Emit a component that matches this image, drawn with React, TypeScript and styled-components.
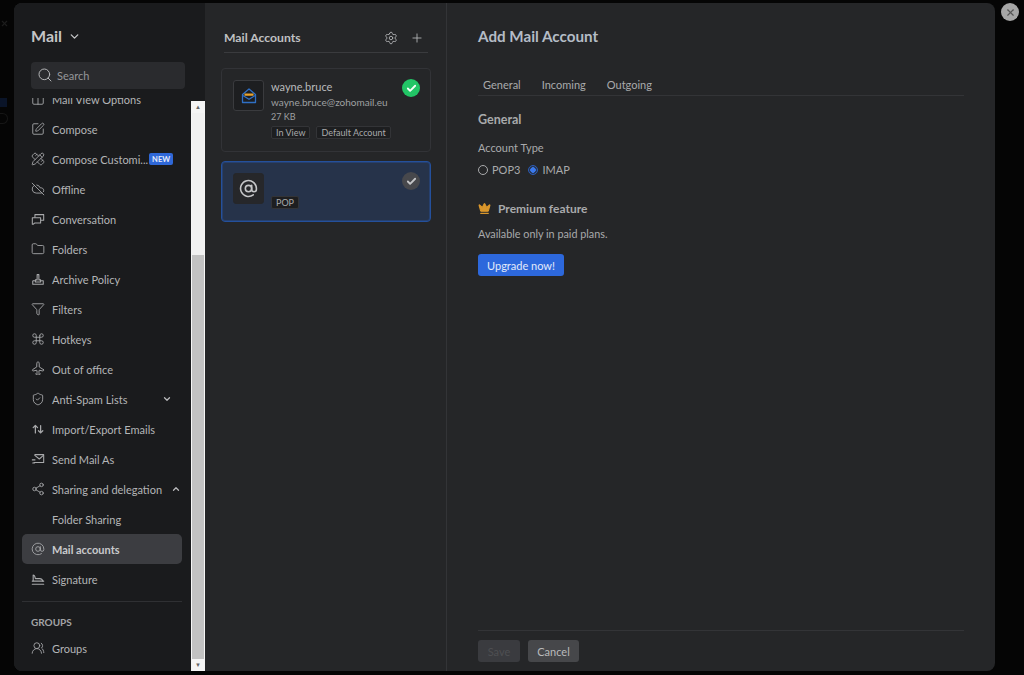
import styled, { createGlobalStyle } from 'styled-components';
import {
    ChevronDown,
    ChevronUp,
    Search,
    SquarePen,
    CloudOff,
    Folder,
    Filter,
    Command,
    Plane,
    ShieldCheck,
    Share2,
    AtSign,
    UsersRound,
    Settings,
    Plus,
    Check,
    X,
    Crown,
    PencilRuler,
    Columns2,
} from 'lucide-react';

const GlobalStyle = createGlobalStyle`
    html, body {
        margin: 0;
        padding: 0;
        height: 100%;
        background: #050505;
        overflow: hidden;
    }
    body {
        font-family: 'Lato', 'Liberation Sans', sans-serif;
        color: #c4c5c7;
    }
    * { box-sizing: border-box; }
`;

// hand drawn ones, lucide has nothing close
const ArchiveTrayIcon = () => (
    <svg viewBox="0 0 16 16" fill="none" stroke="currentColor" strokeWidth="1.2" strokeLinejoin="round">
        <path d="M2 10v4h12v-4h-2.500" />
        <path d="M2 10h2.500" />
        <path d="M5 11.500h6v-2.500H9V3H7v6H5z" />
    </svg>
);

const ConversationIcon = () => (
    <svg viewBox="0 0 16 16" fill="none" stroke="currentColor" strokeWidth="1.2" strokeLinejoin="round">
        <path d="M1.500 6.500h9.500v6H4.500l-2 1.500H1.500z" />
        <path d="M4.500 6.500V3h10v6.500H11" />
    </svg>
);

const SendMailIcon = () => (
    <svg viewBox="0 0 16 16" fill="none" stroke="currentColor" strokeWidth="1.2" strokeLinejoin="round">
        <path d="M4 3h10.500v9H3" />
        <path d="M4 3.500 9.500 8l5-4.500" />
        <path d="M1 9h4M1.500 12.500h3" />
    </svg>
);

const SwapArrowsIcon = () => (
    <svg viewBox="0 0 16 16" fill="none" stroke="currentColor" strokeWidth="1.4" strokeLinecap="round" strokeLinejoin="round">
        <path d="M5 12.500V4M2.500 6.500 5 4l2.500 2.500" />
        <path d="M11 4v8.500M8.500 10l2.500 2.500 2.500-2.500" />
    </svg>
);

const SignatureLinesIcon = () => (
    <svg viewBox="0 0 16 16" fill="none" stroke="currentColor" strokeWidth="1.3" strokeLinecap="round" strokeLinejoin="round">
        <path d="M1.500 10.500h13M1.500 14h13" />
        <path d="M2.500 10V3.500c1 0 1.500.5 1.800 1.500l.7 2.500h5c2 0 3 1 3.500 3" />
    </svg>
);

const TopPlaneIcon = () => (
    <PlaneTurn>
        <Plane size={17} strokeWidth={1.5} />
    </PlaneTurn>
);

const settingsItems = [
    { label: 'Mail View Options', icon: Columns2 },
    { label: 'Compose', icon: SquarePen },
    { label: 'Compose Customi...', icon: PencilRuler, isNew: true },
    { label: 'Offline', icon: CloudOff },
    { label: 'Conversation', icon: ConversationIcon },
    { label: 'Folders', icon: Folder },
    { label: 'Archive Policy', icon: ArchiveTrayIcon },
    { label: 'Filters', icon: Filter },
    { label: 'Hotkeys', icon: Command },
    { label: 'Out of office', icon: TopPlaneIcon },
    { label: 'Anti-Spam Lists', icon: ShieldCheck, caret: 'down' },
    { label: 'Import/Export Emails', icon: SwapArrowsIcon },
    { label: 'Send Mail As', icon: SendMailIcon },
    { label: 'Sharing and delegation', icon: Share2, caret: 'up' },
    { label: 'Folder Sharing' },
    { label: 'Mail accounts', icon: AtSign, active: true },
    { label: 'Signature', icon: SignatureLinesIcon },
];

export default function App() {
    return (
        <>
            <GlobalStyle />
            <Page>
                <BackdropStrip>
                    <X size={9} strokeWidth={3} />
                    <BackdropMail />
                    <BackdropCount />
                </BackdropStrip>
                <Modal>
                    <Sidebar>
                        <SidebarHead>
                            <MailTitle>
                                Mail <ChevronDown size={13} strokeWidth={2.5} />
                            </MailTitle>
                            <SearchBox>
                                <Search size={16} strokeWidth={1.5} />
                                <span>Search</span>
                            </SearchBox>
                        </SidebarHead>
                        <SidebarBody>
                            <NavScroll>
                                <NavList>
                                    {settingsItems.map((item) => (
                                        <NavItem key={item.label} $active={item.active}>
                                            <NavIcon>
                                                {item.icon && <item.icon size={17} strokeWidth={1.5} />}
                                            </NavIcon>
                                            <NavLabel>{item.label}</NavLabel>
                                            {item.isNew && <NewBadge>NEW</NewBadge>}
                                            {item.caret === 'down' && (
                                                <CaretSlot $gap={10}><ChevronDown size={10} strokeWidth={3} /></CaretSlot>
                                            )}
                                            {item.caret === 'up' && (
                                                <CaretSlot $gap={1}><ChevronUp size={10} strokeWidth={3} /></CaretSlot>
                                            )}
                                        </NavItem>
                                    ))}
                                </NavList>
                                <NavDivider />
                                <GroupTitle>GROUPS</GroupTitle>
                                <NavItem>
                                    <NavIcon><UsersRound size={17} strokeWidth={1.5} /></NavIcon>
                                    <NavLabel>Groups</NavLabel>
                                </NavItem>
                            </NavScroll>
                            <Scrollbar>
                                <ScrollArrow>▲</ScrollArrow>
                                <ScrollTrackTop />
                                <ScrollThumb />
                                <ScrollArrow>▼</ScrollArrow>
                            </Scrollbar>
                        </SidebarBody>
                    </Sidebar>

                    <AccountsPanel>
                        <AccountsHead>
                            <AccountsTitle>Mail Accounts</AccountsTitle>
                            <HeadIcons>
                                <Settings size={14} strokeWidth={1.5} />
                                <Plus size={14} strokeWidth={1.5} />
                            </HeadIcons>
                        </AccountsHead>
                        <AccountCard>
                            <AvatarBox>
                                <ZohoMailIcon />
                            </AvatarBox>
                            <AccountInfo>
                                <AccountName>wayne.bruce</AccountName>
                                <AccountMail>wayne.bruce@zohomail.eu</AccountMail>
                                <AccountSize>27 KB</AccountSize>
                                <TagRow>
                                    <Tag>In View</Tag>
                                    <Tag>Default Account</Tag>
                                </TagRow>
                            </AccountInfo>
                            <StatusDot $on>
                                <Check size={11} strokeWidth={4} />
                            </StatusDot>
                        </AccountCard>
                        <AccountCard $selected>
                            <AvatarBox $filled>
                                <AtSign size={19} strokeWidth={2} />
                            </AvatarBox>
                            <AccountInfo>
                                <PopTagRow>
                                    <Tag>POP</Tag>
                                </PopTagRow>
                            </AccountInfo>
                            <StatusDot>
                                <Check size={11} strokeWidth={4} />
                            </StatusDot>
                        </AccountCard>
                    </AccountsPanel>

                    <DetailPanel>
                        <DetailTitle>Add Mail Account</DetailTitle>
                        <Tabs>
                            <TabItem>General</TabItem>
                            <TabItem>Incoming</TabItem>
                            <TabItem>Outgoing</TabItem>
                        </Tabs>
                        <SectionTitle>General</SectionTitle>
                        <FieldLabel>Account Type</FieldLabel>
                        <RadioRow>
                            <RadioOption>
                                <RadioCircle />
                                POP3
                            </RadioOption>
                            <RadioOption>
                                <RadioCircle $checked />
                                IMAP
                            </RadioOption>
                        </RadioRow>
                        <PremiumRow>
                            <Crown size={13} fill="#d9962b" color="#d9962b" />
                            <PremiumText>Premium feature</PremiumText>
                        </PremiumRow>
                        <PaidNote>Available only in paid plans.</PaidNote>
                        <UpgradeButton>Upgrade now!</UpgradeButton>
                        <DetailFooter>
                            <FooterButton $disabled>Save</FooterButton>
                            <FooterButton>Cancel</FooterButton>
                        </DetailFooter>
                    </DetailPanel>
                </Modal>
                <CloseButton>
                    <X size={11} strokeWidth={2.5} />
                </CloseButton>
            </Page>
        </>
    );
}

const ZohoMailIcon = () => (
    <svg width="16" height="16" viewBox="0 0 16 16" fill="none">
        <path d="M1.500 6.500 8 1l6.500 5.500V14.500h-13z" stroke="#2f6fc4" strokeWidth="1.300" strokeLinejoin="round" />
        <path d="M3.500 5.500h9v2.200h-9z" fill="#e8a32e" />
        <path d="M1.800 7.500 8 11.200l6.200-3.700" stroke="#2f6fc4" strokeWidth="1.300" />
    </svg>
);

const Page = styled.div`
    width: 1024px;
    height: 675px;
    padding: 3px 29px 4px 14px;
    position: relative;
`;

const BackdropStrip = styled.div`
    position: absolute;
    top: 19px;
    left: 0;
    width: 10px;
    display: flex;
    flex-direction: column;
    color: #1d1d1d;
`;

const BackdropMail = styled.span`
    margin-top: 70px;
    width: 7px;
    height: 9px;
    background: #0a1428;
`;

const BackdropCount = styled.span`
    margin-top: 6px;
    width: 8px;
    height: 11px;
    border: 1px solid #161616;
    border-left: none;
    border-radius: 0 6px 6px 0;
`;

const Modal = styled.div`
    width: 981px;
    height: 668px;
    display: flex;
    border-radius: 8px;
    overflow: hidden;
    background: #252628;
`;

const Sidebar = styled.aside`
    width: 191px;
    display: flex;
    flex-direction: column;
    background: #1a1b1d;
`;

const SidebarHead = styled.div`
    height: 95px;
    padding: 23px 6px 0 17px;
    flex-shrink: 0;
`;

const MailTitle = styled.div`
    display: flex;
    align-items: center;
    gap: 6px;
    font-size: 16px;
    font-weight: 700;
    line-height: 20px;
    color: #c4c5c7;
`;

const SearchBox = styled.div`
    margin-top: 16px;
    width: 154px;
    height: 27px;
    display: flex;
    align-items: center;
    gap: 4px;
    padding: 0 0 1px 6px;
    background: #2a2b2e;
    border-radius: 4px;
    font-size: 11px;
    color: #96979a;
    svg { color: #b4b5b7; }
`;

const SidebarBody = styled.div`
    flex: 1;
    min-height: 0;
    display: flex;
    width: 191px;
`;

const NavScroll = styled.div`
    width: 177px;
    padding: 0 9px 0 8px;
    flex-shrink: 0;
    overflow: hidden;
`;

const NavList = styled.div`
    display: flex;
    flex-direction: column;
    margin-top: -14px;
`;

const NavItem = styled.div<{ $active?: boolean }>`
    height: 30px;
    flex-shrink: 0;
    display: flex;
    align-items: center;
    border-radius: 5px;
    padding-left: 9px;
    font-size: 11px;
    color: ${(props) => (props.$active ? '#c9cacc' : '#b4b5b7')};
    font-weight: ${(props) => (props.$active ? 700 : 400)};
    background: ${(props) => (props.$active ? '#3c3d41' : 'transparent')};
`;

const NavIcon = styled.span`
    width: 21px;
    height: 17px;
    display: flex;
    align-items: center;
    flex-shrink: 0;
    color: #a8a9ab;
    svg { width: 14px; height: 14px; }
`;

const PlaneTurn = styled.span`
    display: flex;
    transform: rotate(-45deg);
`;

const NavLabel = styled.span`
    white-space: nowrap;
`;

const NewBadge = styled.span`
    margin-left: 1px;
    padding: 0 3px;
    height: 12px;
    display: flex;
    align-items: center;
    border-radius: 2px;
    background: #2f68d8;
    color: #e6ecf9;
    font-size: 7.500px;
    font-weight: 700;
`;

const CaretSlot = styled.span<{ $gap: number }>`
    margin-left: auto;
    margin-right: ${(props) => props.$gap}px;
    display: flex;
    color: #b9babc;
`;

const NavDivider = styled.div`
    height: 1px;
    margin-top: 7px;
    background: #2f3033;
`;

const GroupTitle = styled.div`
    margin-top: 14px;
    margin-bottom: 5px;
    padding-left: 9px;
    font-size: 10px;
    font-weight: 700;
    line-height: 12px;
    color: #a3a4a6;
`;

const Scrollbar = styled.div`
    width: 14px;
    margin-top: 3px;
    display: flex;
    flex-direction: column;
    background: #c2c2c2;
    border-left: 1px solid #f5f5f5;
    border-right: 1px solid #f5f5f5;
`;

const ScrollArrow = styled.div`
    height: 12px;
    flex-shrink: 0;
    background: #f5f5f5;
    color: #666;
    font-size: 6px;
    line-height: 12px;
    text-align: center;
`;

const ScrollTrackTop = styled.div`
    height: 142px;
    flex-shrink: 0;
    background: #f1f1f1;
`;

const ScrollThumb = styled.div`
    flex: 1;
    background: #c2c2c2;
`;

const AccountsPanel = styled.section`
    width: 242px;
    padding: 0 15px 0 16px;
    border-right: 1px solid #333437;
`;

const AccountsHead = styled.div`
    height: 50px;
    margin: 0 3px 15px 3px;
    padding-top: 26px;
    display: flex;
    justify-content: space-between;
    border-bottom: 1px solid #3a3b3e;
`;

const AccountsTitle = styled.h2`
    margin: 0;
    font-size: 12.200px;
    font-weight: 700;
    line-height: 18px;
    color: #c0c1c3;
`;

const HeadIcons = styled.div`
    height: 18px;
    display: flex;
    align-items: center;
    gap: 12px;
    padding-right: 4px;
    color: #b4b5b7;
`;

const AccountCard = styled.div<{ $selected?: boolean }>`
    position: relative;
    display: flex;
    gap: 7px;
    padding: 11px;
    margin-bottom: 9px;
    border-radius: 4px;
    height: ${(props) => (props.$selected ? '61px' : '84px')};
    border: 1px solid ${(props) => (props.$selected ? '#24509c' : '#323337')};
    box-shadow: ${(props) => (props.$selected ? 'inset 0 0 0 1px #26406e' : 'none')};
    background: ${(props) => (props.$selected ? '#26334a' : 'transparent')};
`;

const AvatarBox = styled.div<{ $filled?: boolean }>`
    width: 31px;
    height: 31px;
    flex-shrink: 0;
    display: flex;
    align-items: center;
    justify-content: center;
    border-radius: 3px;
    border: 1px solid ${(props) => (props.$filled ? '#26272a' : '#3a3b3e')};
    background: ${(props) => (props.$filled ? '#26272a' : '#1d1e20')};
    color: #c4c5c7;
`;

const AccountInfo = styled.div`
    min-width: 0;
    display: flex;
    flex-direction: column;
`;

const AccountName = styled.div`
    font-size: 11px;
    line-height: 14px;
    color: #b9babc;
`;

const AccountMail = styled.div`
    margin-top: 1px;
    font-size: 10px;
    line-height: 14px;
    white-space: nowrap;
    color: #9fa0a2;
`;

const AccountSize = styled.div`
    margin-top: 1px;
    font-size: 9px;
    line-height: 14px;
    color: #9fa0a2;
`;

const TagRow = styled.div`
    display: flex;
    gap: 6px;
    margin-top: 2px;
`;

const PopTagRow = styled(TagRow)`
    margin-top: 23px;
`;

const Tag = styled.span`
    height: 13px;
    padding: 0 4px;
    border: 1px solid #333437;
    border-radius: 2px;
    background: #1d1e20;
    font-size: 9px;
    line-height: 11px;
    color: #a9aaac;
    white-space: nowrap;
`;

const StatusDot = styled.span<{ $on?: boolean }>`
    position: absolute;
    top: 10px;
    right: 10px;
    width: 18px;
    height: 18px;
    display: flex;
    align-items: center;
    justify-content: center;
    border-radius: 50%;
    background: ${(props) => (props.$on ? '#22c566' : '#47484c')};
    color: ${(props) => (props.$on ? '#f4fff8' : '#c4c5c7')};
`;

const DetailPanel = styled.section`
    flex: 1;
    min-width: 0;
    display: flex;
    flex-direction: column;
    padding: 0 31px;
`;

const DetailTitle = styled.h1`
    margin: 23px 0 0;
    font-size: 15.200px;
    font-weight: 700;
    line-height: 20px;
    color: #b4bcc6;
`;

const Tabs = styled.div`
    margin-top: 29px;
    height: 21px;
    display: flex;
    gap: 21px;
    padding-left: 5px;
    border-bottom: 1px solid #333437;
`;

const TabItem = styled.div`
    font-size: 11px;
    line-height: 20px;
    color: #a9aaac;
`;

const SectionTitle = styled.div`
    margin-top: 16px;
    font-size: 12.500px;
    font-weight: 700;
    line-height: 16px;
    color: #a9aaac;
`;

const FieldLabel = styled.div`
    margin-top: 12px;
    font-size: 11px;
    line-height: 16px;
    color: #a9aaac;
`;

const RadioRow = styled.div`
    margin-top: 6px;
    display: flex;
    gap: 8px;
`;

const RadioOption = styled.label`
    display: flex;
    align-items: center;
    gap: 4px;
    font-size: 11px;
    line-height: 16px;
    color: #a9aaac;
`;

const RadioCircle = styled.span<{ $checked?: boolean }>`
    width: 10px;
    height: 10px;
    border-radius: 50%;
    border: 1px solid ${(props) => (props.$checked ? '#2b5cb8' : '#a9aaac')};
    background: ${(props) => (props.$checked ? 'radial-gradient(circle, #3a78ec 0 2.500px, #26334a 3px)' : 'transparent')};
`;

const PremiumRow = styled.div`
    margin-top: 22px;
    display: flex;
    align-items: center;
    gap: 7px;
    height: 16px;
`;

const PremiumText = styled.span`
    font-size: 12px;
    font-weight: 700;
    color: #a9aaac;
`;

const PaidNote = styled.div`
    margin-top: 10px;
    font-size: 10.800px;
    line-height: 16px;
    color: #a9aaac;
`;

const UpgradeButton = styled.button`
    margin-top: 12px;
    width: 86px;
    height: 22px;
    padding: 0;
    border: none;
    border-radius: 3px;
    background: #2d68dc;
    color: #e3eafa;
    font-family: inherit;
    font-size: 11px;
`;

const DetailFooter = styled.div`
    margin-top: auto;
    height: 41px;
    display: flex;
    gap: 8px;
    padding-top: 9px;
    border-top: 1px solid #333437;
`;

const FooterButton = styled.button<{ $disabled?: boolean }>`
    height: 22px;
    width: ${(props) => (props.$disabled ? '42px' : '51px')};
    padding: 0;
    border: none;
    border-radius: 3px;
    background: ${(props) => (props.$disabled ? '#3a3b3f' : '#46474a')};
    color: ${(props) => (props.$disabled ? '#4e4f52' : '#b9babc')};
    font-family: inherit;
    font-size: 11px;
`;

const CloseButton = styled.span`
    position: absolute;
    top: 3px;
    left: 1001px;
    width: 18px;
    height: 18px;
    display: flex;
    align-items: center;
    justify-content: center;
    border-radius: 50%;
    background: #a6a6a6;
    color: #555;
`;
